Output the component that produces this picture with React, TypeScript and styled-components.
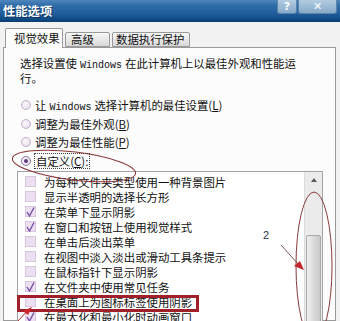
import styled, { createGlobalStyle, css } from 'styled-components';

const GlobalStyle = createGlobalStyle`
  html, body {
    margin: 0;
    padding: 0;
    width: 340px;
    height: 321px;
    overflow: hidden;
    background: #efefef;
  }
  body {
    font-family: "Noto Sans CJK SC", "Noto Sans", sans-serif;
  }
`;

const Window = styled.div`
  position: relative;
  width: 340px;
  height: 321px;
  overflow: hidden;
  display: flex;
  flex-direction: column;
  background: #f2f2f2;
`;

const TitleBar = styled.div`
  height: 22px;
  flex: none;
  display: flex;
  align-items: flex-start;
  background: linear-gradient(
    to bottom,
    #4f86bd 0%,
    #2f6ca8 25%,
    #205e9c 60%,
    #134f8a 82%,
    #0b3e72 100%
  );
`;

const Title = styled.span`
  padding: 4px 0 0 3px;
  color: #fff;
  font-size: 12.3px;
  line-height: 14px;
  font-weight: bold;
  text-shadow: 1px 1px 0 #0b3562;
`;

const CaptionButton = styled.span<{ $w: number; $first?: boolean }>`
  width: ${p => p.$w}px;
  height: 14px;
  margin-left: ${p => (p.$first ? 'auto' : '1px')};
  margin-right: ${p => (p.$first ? '0' : '3px')};
  display: flex;
  align-items: center;
  justify-content: center;
  color: #fff;
  font-family: "DejaVu Sans", sans-serif;
  font-weight: bold;
  font-size: 11px;
  line-height: 14px;
  background: linear-gradient(to bottom, #b2cce2, #86a9c8);
  border: 1px solid #5c84aa;
  border-top: none;
  border-radius: 0 0 3px 3px;
  box-sizing: border-box;
`;

const Body = styled.div`
  flex: 1;
  display: flex;
  flex-direction: column;
  padding: 6px 4px 0 3px;
  min-height: 0;
`;

const TabRow = styled.div`
  display: flex;
  align-items: flex-end;
  height: 19px;
  padding-left: 2px;
  flex: none;
`;

const Tab = styled.span<{ $w: number; $active?: boolean; $pad: number }>`
  box-sizing: border-box;
  width: ${p => p.$w}px;
  margin-right: 2px;
  padding-left: ${p => p.$pad}px;
  font-size: 11.4px;
  color: #111;
  border: 1px solid #9a9a9a;
  border-radius: 2px 2px 0 0;
  white-space: nowrap;
  overflow: hidden;
  ${p =>
    p.$active
      ? css`
          height: 20px;
          margin-bottom: -1px;
          line-height: 18px;
          background: #fcfcfc;
          border-bottom: none;
          position: relative;
          z-index: 1;
        `
      : css`
          height: 15px;
          line-height: 13px;
          background: linear-gradient(to bottom, #f7f7f7, #d8d8d8);
        `}
`;

const Panel = styled.div`
  flex: 1;
  min-height: 0;
  border: 1px solid #9a9a9a;
  background: #fcfcfc;
  padding: 8px 0 0 13px;
  display: flex;
  flex-direction: column;
`;

const Intro = styled.div`
  height: 28px;
  flex: none;
  padding-left: 3px;
  font-size: 11.4px;
  line-height: 14px;
  color: #111;
`;

const Latin = styled.span`
  font-family: "Liberation Mono", monospace;
  font-size: 10px;
  line-height: 10px;
  margin: 0 3px;
`;

const RadioGroup = styled.div`
  margin-top: 12px;
  display: flex;
  flex-direction: column;
`;

const RadioRow = styled.div`
  height: 18.6px;
  flex: none;
  display: flex;
  align-items: center;
  padding-left: 4px;
  gap: 4px;
  font-size: 11.4px;
  line-height: 14px;
  color: #111;
`;

const Radio = styled.span<{ $checked?: boolean }>`
  position: relative;
  flex: none;
  box-sizing: border-box;
  width: 10px;
  height: 10px;
  border-radius: 50%;
  border: 1px solid #c2b2cc;
  background: radial-gradient(circle at 40% 40%, #fdfafd, #e2d4ea);
  ${p =>
    p.$checked &&
    css`
      border-color: #8c76a0;
      &::after {
        content: '';
        position: absolute;
        inset: 2px;
        border-radius: 50%;
        background: #5a3a7c;
      }
    `}
`;

const Focus = styled.span`
  outline: 1px dotted #444;
  padding: 0 1px;
`;

const ListBox = styled.div`
  margin-top: 1px;
  width: 306px;
  height: 160px;
  flex: none;
  box-sizing: border-box;
  border: 1px solid #a3a3a3;
  background: #fff;
  display: flex;
  overflow: hidden;
`;

const Items = styled.div`
  flex: 1;
  padding-top: 2px;
  display: flex;
  flex-direction: column;
`;

const ItemRow = styled.div`
  height: 15px;
  flex: none;
  display: flex;
  align-items: center;
  padding-left: 7px;
  gap: 8px;
  font-size: 11.4px;
  line-height: 14px;
  color: #111;
  white-space: nowrap;
`;

const Check = styled.span`
  flex: none;
  box-sizing: border-box;
  width: 11px;
  height: 11px;
  border: 1px solid #d6c6de;
  background: #ecdff1;
  display: flex;
  align-items: center;
  justify-content: center;
`;

const Scrollbar = styled.div`
  width: 17px;
  flex: none;
  background: #ebebeb;
  border-left: 1px solid #dcdcdc;
  display: flex;
  flex-direction: column;
  align-items: center;
`;

const ArrowButton = styled.div`
  height: 17px;
  width: 100%;
  display: flex;
  align-items: center;
  justify-content: center;
  &::before {
    content: '';
    border-left: 3.5px solid transparent;
    border-right: 3.5px solid transparent;
    border-bottom: 4px solid #5a5a5a;
  }
`;

const Thumb = styled.div`
  margin-top: 48px;
  width: 15px;
  height: 110px;
  box-sizing: border-box;
  border: 1px solid #a9a9a9;
  border-radius: 2px;
  background: linear-gradient(to right, #f0f0f0, #dadada 50%, #c9c9c9);
`;

const Overlay = styled.svg`
  position: absolute;
  left: 0;
  top: 0;
  pointer-events: none;
`;

const items: [string, boolean][] = [
  ['为每种文件夹类型使用一种背景图片', false],
  ['显示半透明的选择长方形', false],
  ['在菜单下显示阴影', true],
  ['在窗口和按钮上使用视觉样式', true],
  ['在单击后淡出菜单', false],
  ['在视图中淡入淡出或滑动工具条提示', false],
  ['在鼠标指针下显示阴影', false],
  ['在文件夹中使用常见任务', true],
  ['在桌面上为图标标签使用阴影', false],
  ['在最大化和最小化时动画窗口', true],
];

function CheckBox({ checked }: { checked: boolean }) {
  return (
    <Check>
      {checked && (
        <svg width="9" height="10" viewBox="0 0 9 10">
          <path d="M1 5 L3.5 9 L8 0.5" fill="none" stroke="#7a4fa6" strokeWidth="1.4" />
        </svg>
      )}
    </Check>
  );
}

export default function App() {
  return (
    <>
      <GlobalStyle />
      <Window>
        <TitleBar>
          <Title>性能选项</Title>
          <CaptionButton $w={20} $first>?</CaptionButton>
          <CaptionButton $w={39}>✕</CaptionButton>
        </TitleBar>
        <Body>
          <TabRow>
            <Tab $w={58} $pad={8} $active>视觉效果</Tab>
            <Tab $w={45} $pad={5}>高级</Tab>
            <Tab $w={78} $pad={3}>数据执行保护</Tab>
          </TabRow>
          <Panel>
            <Intro>
              选择设置使<Latin>Windows</Latin>在此计算机上以最佳外观和性能运
              <br />
              行。
            </Intro>
            <RadioGroup>
              <RadioRow>
                <Radio />
                <span>
                  让<Latin>Windows</Latin>选择计算机的最佳设置(<u>L</u>)
                </span>
              </RadioRow>
              <RadioRow>
                <Radio />
                <span>调整为最佳外观(<u>B</u>)</span>
              </RadioRow>
              <RadioRow>
                <Radio />
                <span>调整为最佳性能(<u>P</u>)</span>
              </RadioRow>
              <RadioRow>
                <Radio $checked />
                <Focus>自定义(<u>C</u>):</Focus>
              </RadioRow>
            </RadioGroup>
            <ListBox>
              <Items>
                {items.map(([label, checked]) => (
                  <ItemRow key={label}>
                    <CheckBox checked={checked} />
                    <span>{label}</span>
                  </ItemRow>
                ))}
              </Items>
              <Scrollbar>
                <ArrowButton />
                <Thumb />
              </Scrollbar>
            </ListBox>
          </Panel>
        </Body>
        <Overlay width="340" height="321" viewBox="0 0 340 321">
          <ellipse
            cx="74"
            cy="166"
            rx="62"
            ry="14"
            transform="rotate(7 74 166)"
            fill="none"
            stroke="#8a3434"
            strokeWidth="1"
          />
          <ellipse cx="314" cy="266" rx="18" ry="74" fill="none" stroke="#8a3a3a" strokeWidth="1" />
          <text x="263" y="239" fontSize="11" fontFamily="Liberation Sans, sans-serif" fill="#2a3148">
            2
          </text>
          <line x1="281" y1="245" x2="299" y2="265" stroke="#6a4646" strokeWidth="0.9" />
          <polygon points="304,270 294,266 300,261" fill="#c4242a" />
          <rect x="18.5" y="296.5" width="179" height="14" fill="none" stroke="#a11f28" strokeWidth="3" />
          <line x1="18" y1="321" x2="27" y2="311" stroke="#a82828" strokeWidth="1" />
          <polygon points="32,307 23,311 28,315" fill="#d0242a" />
        </Overlay>
      </Window>
    </>
  );
}
